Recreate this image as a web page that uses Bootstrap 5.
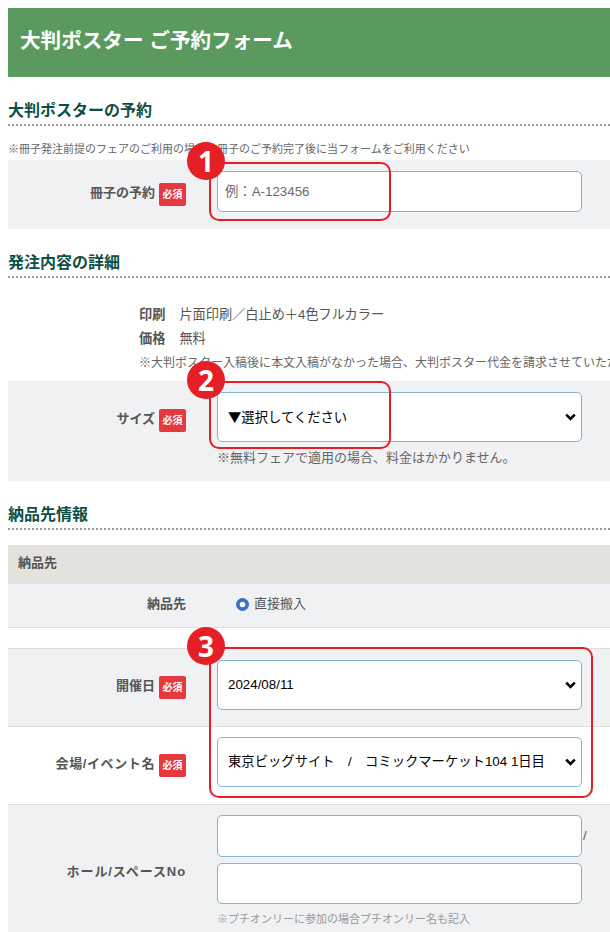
<!DOCTYPE html>
<html lang="ja">
<head>
<meta charset="utf-8">
<title>大判ポスター ご予約フォーム</title>
<link href="https://cdn.jsdelivr.net/npm/bootstrap@5.3.0/dist/css/bootstrap.min.css" rel="stylesheet">
<style>
html,body{overflow:hidden;height:932px}
body{font-family:"Liberation Sans","Noto Sans CJK JP",sans-serif;font-size:13px;color:#555;background:#fff}
.sheet{position:relative;width:610px;height:932px;overflow:hidden;padding:8px 0 0 8px}
.hero{height:69px;background:#5a9a5e;color:#fff;font-size:20.6px;font-weight:700;padding:0 12px 2px;display:flex;align-items:center;margin-bottom:23px}
.sec-title{font-size:16px;font-weight:700;color:#0d4f45;line-height:20px;padding:1px 0 3px;border-bottom:2px dotted #999;margin:0}
.sec-follow{margin-top:23px}
.sec-note{font-size:11px;line-height:16px;color:#666;white-space:nowrap;margin:15px 0 3px}
.band{background:#f0f1f3;display:flex}
.plain{background:#fff}
.lined{border-bottom:1px solid #ddd}
.lab{width:178px;flex:none;display:flex;justify-content:flex-end;align-items:center;gap:4px;font-weight:700;color:#555;white-space:nowrap;padding-bottom:3px}
.must{width:27px;height:23px;background:#e5383f;color:#fff;font-size:10px;font-weight:700;border-radius:2px;display:flex;align-items:center;justify-content:center;margin-top:3px}
.field{width:365px;margin-left:31px;flex:none}
.form-control.ctl,.form-select.ctl{border:1px solid #85b4d4;border-radius:5px;font-size:13.33px;color:#000;box-shadow:none}
.form-control.ctl{height:41px;padding:0 7px}
.form-control.ctl::placeholder{color:#6a6a6a}
.form-select.ctl{height:50px;padding:0 30px 0 10px;background-size:11px 8px;background-position:right 5px center;background-image:url("data:image/svg+xml,%3csvg xmlns='http://www.w3.org/2000/svg' viewBox='0 0 11 8'%3e%3cpath fill='none' stroke='%23000' stroke-width='2.6' d='M1.2 1.6 5.5 6 9.8 1.6'/%3e%3c/svg%3e")}
.cjk-first{font-family:"Noto Sans CJK JP",sans-serif}
.row-a{height:69px;padding-top:11px}
.row-a .lab{height:47px}
.row-b{height:100px;padding-top:11px}
.row-b .lab{height:56px}
.under{font-size:13px;line-height:18px;margin-top:7px;white-space:nowrap;color:#666}
.detail{padding:25px 0 0 131px;height:103px;white-space:nowrap}
.detail-line{display:flex;gap:14px;line-height:24px;font-size:13.2px}
.detail-line b{color:#555}
.detail-note{line-height:24px;color:#666;font-size:12px}
.head-band{height:39px;margin-top:15px;background:#e3e2dd;font-size:13px;font-weight:700;padding:0 0 4px 10px;display:flex;align-items:center;color:#555}
.recv{height:44px;align-items:center}
.recv .lab{height:100%;padding-bottom:4px}
.recv-check{margin-left:50px;display:flex;align-items:center;gap:5px;margin-bottom:3px;min-height:0;padding:0;font-size:13px}
.recv-check .form-check-input{margin:0;float:none;width:13px;height:13px}
.recv-check .form-check-input:checked{background-color:#3a70c4;border-color:#3a70c4}
.gap-strip{height:21px}
.row-c{height:78px;padding-top:11px}
.row-c .lab{height:55px}
.row-d{height:77px;padding-top:10px}
.row-d .lab{height:57px}
.wide-latin{letter-spacing:.6px}
.wider-latin{letter-spacing:.9px}
.tall{height:130px;align-items:flex-start;padding-top:10px;border-top:1px solid #ddd}
.tall .lab{height:116px}
.slashline{display:flex;gap:1px;margin-bottom:6px;width:390px;align-items:center}
.slashline .form-control{width:365px;flex:none;height:42px}
.small-note{font-size:11px;color:#999;line-height:16px;margin-top:7px;white-space:nowrap}
.mark-box{position:absolute;border:2px solid #e61e25;border-radius:10px;pointer-events:none}
.num{position:absolute;width:38px;height:38px;border-radius:50%;background:#e61e25;color:#fff;font-family:"Open Sans","Liberation Sans",sans-serif;font-size:28px;font-weight:700;display:flex;align-items:center;justify-content:center;line-height:1}
.b1{left:209px;top:162px;width:182px;height:59px}
.b2{left:209px;top:381px;width:182px;height:68px}
.b3{left:209px;top:647px;width:384px;height:151px}
.n1{left:187px;top:142px}
.n2{left:187px;top:361px}
.n3{left:187px;top:627px}
</style>
</head>
<body class="m-0">
<div class="sheet">
  <div class="hero">大判ポスター ご予約フォーム</div>

  <h2 class="sec-title">大判ポスターの予約</h2>
  <p class="sec-note">※冊子発注前提のフェアのご利用の場合、冊子のご予約完了後に当フォームをご利用ください</p>
  <div class="band row-a">
    <div class="lab">冊子の予約<span class="must">必須</span></div>
    <div class="field"><input class="form-control ctl" type="text" placeholder="例：A-123456"></div>
  </div>

  <h2 class="sec-title sec-follow">発注内容の詳細</h2>
  <div class="detail">
    <div class="detail-line"><b>印刷</b><span>片面印刷／白止め＋4色フルカラー</span></div>
    <div class="detail-line"><b>価格</b><span>無料</span></div>
    <div class="detail-note">※大判ポスター入稿後に本文入稿がなかった場合、大判ポスター代金を請求させていただきます。</div>
  </div>
  <div class="band row-b">
    <div class="lab">サイズ<span class="must">必須</span></div>
    <div class="field">
      <select class="form-select ctl cjk-first"><option>▼選択してください</option></select>
      <div class="under">※無料フェアで適用の場合、料金はかかりません。</div>
    </div>
  </div>

  <h2 class="sec-title sec-follow">納品先情報</h2>
  <div class="head-band">納品先</div>
  <div class="band recv lined">
    <div class="lab">納品先</div>
    <label class="form-check recv-check"><input class="form-check-input" type="radio" checked><span>直接搬入</span></label>
  </div>
  <div class="gap-strip lined"></div>
  <div class="band row-c lined">
    <div class="lab">開催日<span class="must">必須</span></div>
    <div class="field"><select class="form-select ctl"><option>2024/08/11</option></select></div>
  </div>
  <div class="band plain row-d">
    <div class="lab"><span class="wide-latin">会場/イベント名</span><span class="must">必須</span></div>
    <div class="field"><select class="form-select ctl"><option>東京ビッグサイト　/　コミックマーケット104 1日目</option></select></div>
  </div>
  <div class="band tall">
    <div class="lab wider-latin">ホール/スペースNo</div>
    <div class="field">
      <div class="slashline"><input class="form-control ctl" type="text"><span>/</span></div>
      <input class="form-control ctl" type="text">
      <div class="small-note">※プチオンリーに参加の場合プチオンリー名も記入</div>
    </div>
  </div>

  <div class="mark-box b1"></div><div class="num n1">1</div>
  <div class="mark-box b2"></div><div class="num n2">2</div>
  <div class="mark-box b3"></div><div class="num n3">3</div>
</div>
<script src="https://cdn.jsdelivr.net/npm/bootstrap@5.3.0/dist/js/bootstrap.bundle.min.js"></script>
</body>
</html>
